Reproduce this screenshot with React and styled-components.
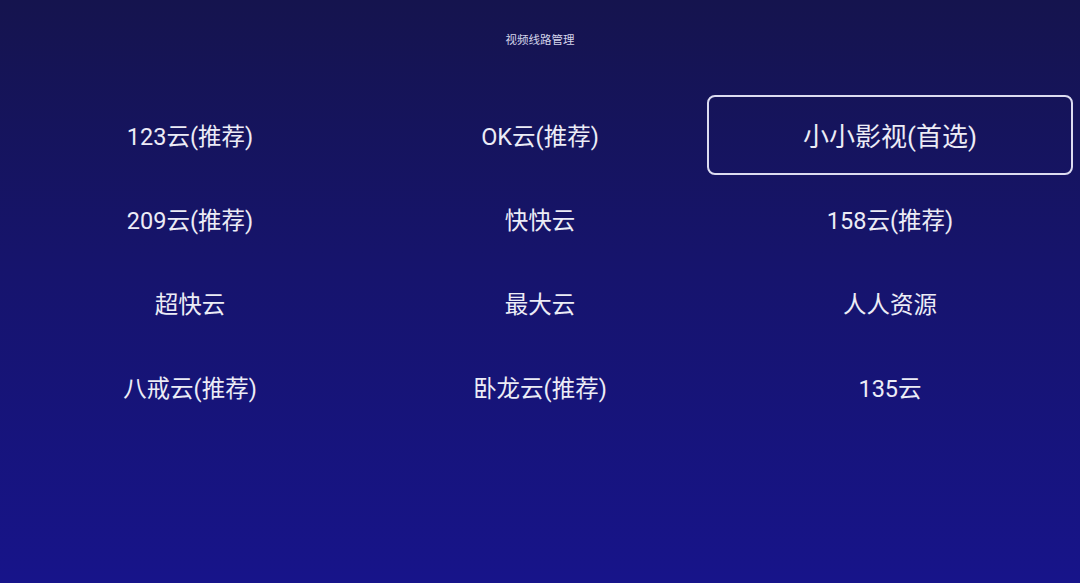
import React from "react";
import styled, { createGlobalStyle } from "styled-components";

const Global = createGlobalStyle`
  html, body { margin: 0; padding: 0; }
  body {
    width: 1080px;
    height: 583px;
    overflow: hidden;
    font-family: Roboto, "Noto Sans CJK SC", sans-serif;
  }
`;

const Screen = styled.div`
  width: 1080px;
  height: 583px;
  background: linear-gradient(180deg, #15144e 0%, #16146c 45%, #17148a 100%);
  display: flex;
  flex-direction: column;
  align-items: stretch;
`;

const Title = styled.div`
  height: 80px;
  padding-top: 32px;
  box-sizing: border-box;
  text-align: center;
  font-size: 11.5px;
  line-height: 16px;
  color: #d4d4ea;
`;

const Grid = styled.div`
  display: grid;
  grid-template-columns: repeat(3, 350px);
  grid-auto-rows: 80px;
  row-gap: 4px;
  padding: 15px 15px 0;
`;

const Item = styled.div`
  margin: 0 -8px;
  display: flex;
  align-items: center;
  justify-content: center;
  box-sizing: border-box;
  border: 2px solid ${(p) => (p.$focused ? "#dcdcf0" : "transparent")};
  border-radius: 8px;
  color: #ececf6;
  font-size: ${(p) => (p.$focused ? "26px" : "23.5px")};
  padding-bottom: 1px;
`;

const items = [
  "123云(推荐)",
  "OK云(推荐)",
  "小小影视(首选)",
  "209云(推荐)",
  "快快云",
  "158云(推荐)",
  "超快云",
  "最大云",
  "人人资源",
  "八戒云(推荐)",
  "卧龙云(推荐)",
  "135云",
];

export default function App() {
  return (
    <>
      <Global />
      <Screen>
        <Title>视频线路管理</Title>
        <Grid>
          {items.map((t, i) => (
            <Item key={t} $focused={i === 2}>
              {t}
            </Item>
          ))}
        </Grid>
      </Screen>
    </>
  );
}
